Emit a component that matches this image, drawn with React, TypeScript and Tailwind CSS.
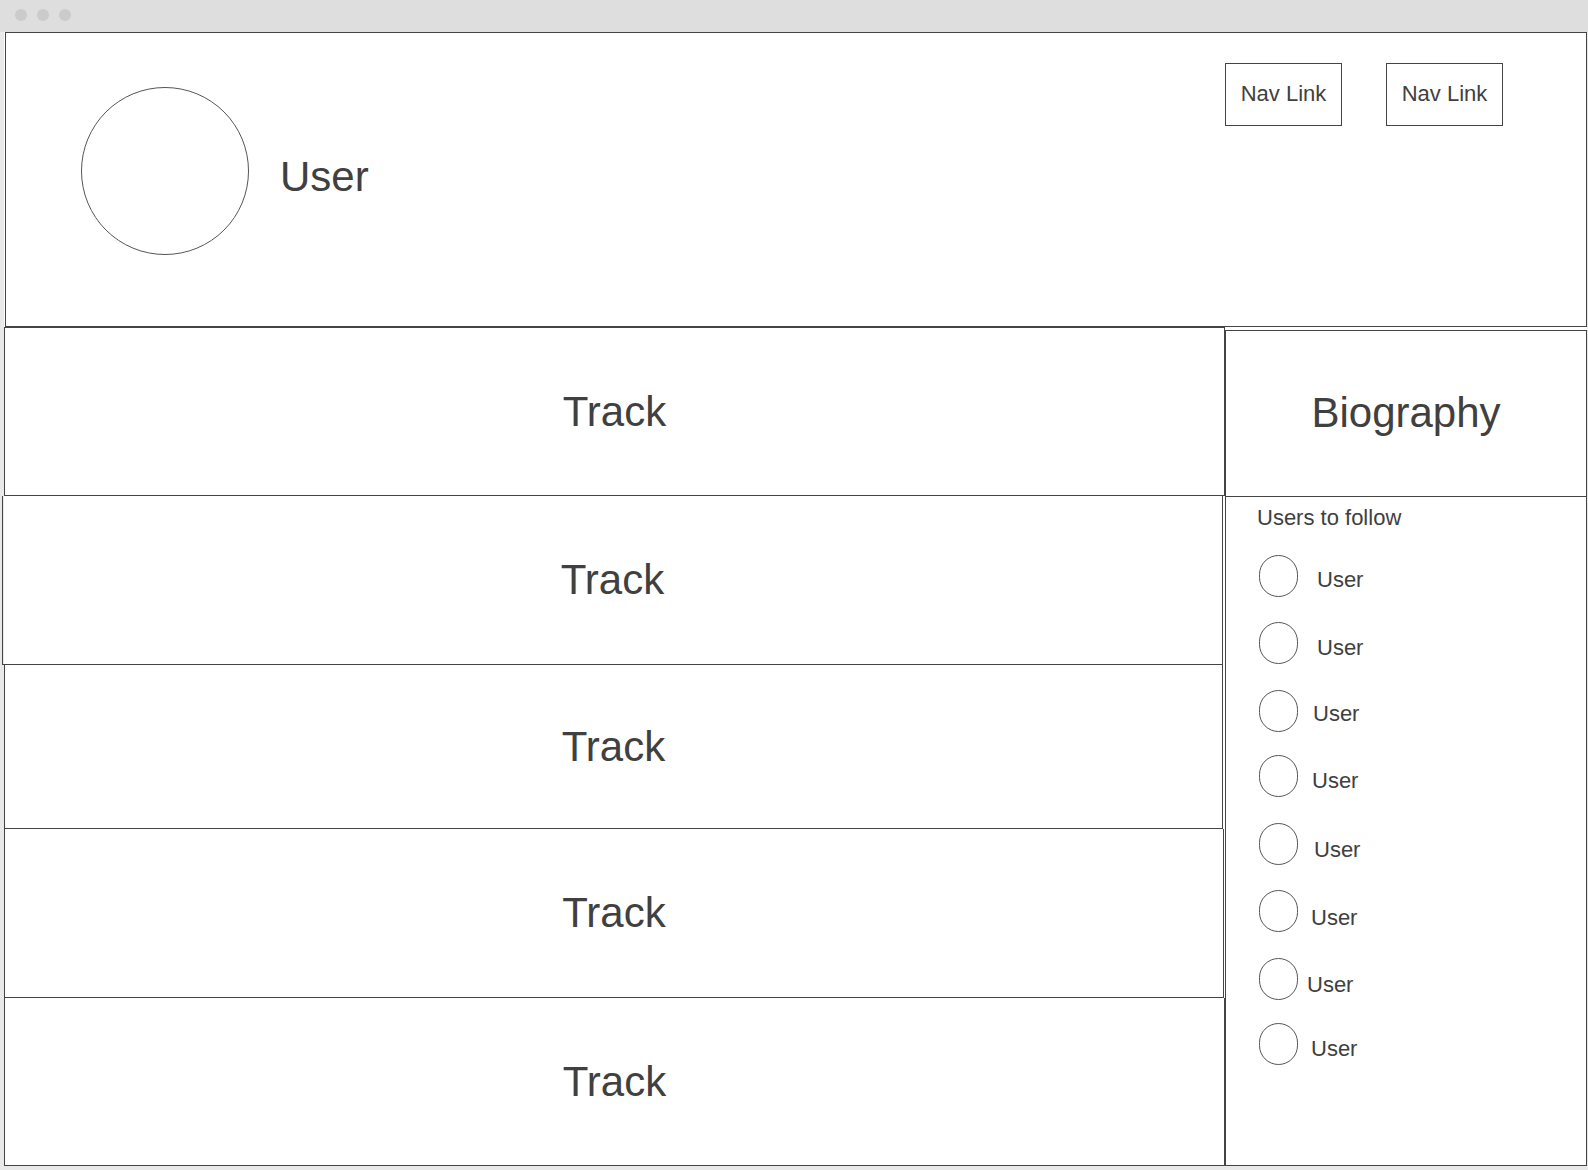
import React from "react";

const tracks = [
  { h: "h-[169px] border-t", m: "" },
  { h: "h-[169px]", m: "-ml-[2px] mr-[2px]" },
  { h: "h-[164px]", m: "mr-[2px]" },
  { h: "h-[169px]", m: "mr-[1px]" },
  { h: "h-[168px]", m: "" },
];

const users = [
  { mt: "mt-[26px]", gap: "gap-[19px]", pt: "pt-[8px]" },
  { mt: "mt-[25px]", gap: "gap-[19px]", pt: "pt-[10px]" },
  { mt: "mt-[26px]", gap: "gap-[15px]", pt: "pt-[5px]" },
  { mt: "mt-[23px]", gap: "gap-[14px]", pt: "pt-[10px]" },
  { mt: "mt-[26px]", gap: "gap-[16px]", pt: "pt-[12px]" },
  { mt: "mt-[25px]", gap: "gap-[13px]", pt: "pt-[14px]" },
  { mt: "mt-[26px]", gap: "gap-[9px]", pt: "pt-[11px]" },
  { mt: "mt-[23px]", gap: "gap-[13px]", pt: "pt-[9px]" },
];

export default function App() {
  return (
    <div className="w-[1588px] h-[1170px] bg-[#e9e9e9] flex flex-col font-['Liberation_Sans',Arial,sans-serif] text-[#404040]">
      <div className="h-[32px] shrink-0 bg-[#dedede] flex items-center gap-[10px] pl-[15px] pb-[2px]">
        <div className="w-[12px] h-[12px] rounded-full bg-[#cbcbcb]" />
        <div className="w-[12px] h-[12px] rounded-full bg-[#cbcbcb]" />
        <div className="w-[12px] h-[12px] rounded-full bg-[#cbcbcb]" />
      </div>
      <div className="ml-[4px] w-[1583px] h-[1134px] bg-white flex flex-col">
        <div className="ml-[1px] w-[1582px] h-[295px] shrink-0 border border-[#444] flex justify-between pl-[75px] pr-[83px]">
          <div className="mt-[54px] flex items-start gap-[31px] self-start">
            <div className="w-[168px] h-[168px] rounded-full border border-[#555]" />
            <div className="h-[168px] flex items-center pt-[12px] text-[42px] leading-none">User</div>
          </div>
          <div className="mt-[30px] flex gap-[44px] self-start">
            <div className="w-[117px] h-[63px] border border-[#444] flex items-center justify-center text-[22px] leading-none pb-[2px]">Nav Link</div>
            <div className="w-[117px] h-[63px] border border-[#444] flex items-center justify-center text-[22px] leading-none pb-[2px]">Nav Link</div>
          </div>
        </div>
        <div className="flex h-[839px]">
          <div className="w-[1221px] flex flex-col">
            {tracks.map((t, i) => (
              <div
                key={i}
                className={`${t.h} ${t.m} border-x border-b border-[#444] flex items-center justify-center text-[42px] leading-none`}
              >
                Track
              </div>
            ))}
          </div>
          <div className="w-[362px] mt-[3px] flex flex-col">
            <div className="h-[167px] border border-[#444] flex items-center justify-center text-[42px] leading-none pb-[2px]">Biography</div>
            <div className="flex-1 border-x border-b border-[#444] pl-[31px] pt-[10px] flex flex-col">
              <div className="text-[22px] leading-none">Users to follow</div>
              {users.map((u, i) => (
                <div key={i} className={`${u.mt} ${u.gap} flex items-center`}>
                  <div className="w-[39px] h-[42px] rounded-full border border-[#555] ml-[2px]" />
                  <span className={`text-[22px] leading-none ${u.pt}`}>User</span>
                </div>
              ))}
            </div>
          </div>
        </div>
      </div>
    </div>
  );
}
